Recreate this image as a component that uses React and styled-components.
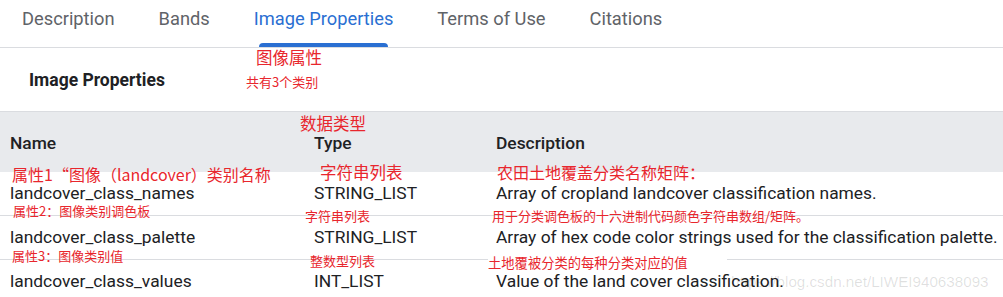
import styled, { createGlobalStyle } from "styled-components";

const GlobalStyle = createGlobalStyle`
  body {
    margin: 0;
    background: #fff;
    font-family: Roboto, "Noto Sans", sans-serif;
    color: #202124;
  }
`;

const Page = styled.div`
  position: relative;
  width: 1003px;
  height: 297px;
  overflow: hidden;
`;

const Tabs = styled.nav`
  display: flex;
  border-bottom: 1px solid #dadce0;
`;

const Tab = styled.div`
  position: relative;
  padding: 0 22px;
  height: 47px;
  line-height: 38px;
  font-size: 18.3px;
  color: ${(props) => (props.$active ? "#2a6fd2" : "#5f6368")};

  &::after {
    content: "";
    display: ${(props) => (props.$active ? "block" : "none")};
    position: absolute;
    left: 27px;
    right: 27px;
    bottom: 0;
    height: 4px;
    border-radius: 4px 4px 0 0;
    background: #2a6fd2;
  }
`;

const Title = styled.h2`
  margin: 0;
  padding: 20px 29px 19px;
  font-size: 17.5px;
  line-height: 24px;
  font-weight: 700;
  color: #202124;
`;

const Table = styled.div`
  border-top: 1px solid #dadce0;
`;

const Row = styled.div`
  display: grid;
  grid-template-columns: 304px 182px 1fr;
  padding: 11px 0 12px 10px;
  font-size: 17.4px;
  line-height: 20px;
  white-space: nowrap;
  border-bottom: 1px solid #dadce0;
`;

const HeaderRow = styled(Row)`
  padding: 21px 0 19px 10px;
  background: #e8eaed;
  font-weight: 500;
  border-bottom: none;
`;

const Note = styled.span`
  position: absolute;
  left: ${(props) => props.$x}px;
  top: ${(props) => props.$y}px;
  font-family: "Noto Sans CJK SC", sans-serif;
  font-size: ${(props) => props.$size}px;
  line-height: 1;
  color: #e8262d;
  white-space: nowrap;
  background: ${(props) => (props.$cover ? "#fff" : "transparent")};
  ${(props) => props.$cover && `width: ${props.$cover}px;`}
`;

const Watermark = styled.span`
  position: absolute;
  left: 731px;
  top: 273px;
  font-family: "Liberation Sans", Arial, sans-serif;
  font-size: 15.2px;
  color: rgba(0, 0, 0, 0.13);
  white-space: nowrap;
`;

const tabs = ["Description", "Bands", "Image Properties", "Terms of Use", "Citations"];

const rows = [
  ["landcover_class_names", "STRING_LIST", "Array of cropland landcover classification names."],
  ["landcover_class_palette", "STRING_LIST", "Array of hex code color strings used for the classification palette."],
  ["landcover_class_values", "INT_LIST", "Value of the land cover classification."],
];

const notes = [
  { x: 256, y: 49, size: 16.5, text: "图像属性" },
  { x: 246, y: 75, size: 13, text: "共有3个类别" },
  { x: 300, y: 115, size: 16.5, text: "数据类型" },
  { x: 12, y: 166, size: 16, text: "属性1“图像（landcover）类别名称" },
  { x: 320, y: 164, size: 16.5, text: "字符串列表" },
  { x: 497, y: 164, size: 16, text: "农田土地覆盖分类名称矩阵：" },
  { x: 13, y: 204, size: 13, text: "属性2：图像类别调色板" },
  { x: 305, y: 209, size: 13, text: "字符串列表" },
  { x: 492, y: 209, size: 13, text: "用于分类调色板的十六进制代码颜色字符串数组/矩阵。" },
  { x: 12, y: 249, size: 13, text: "属性3：图像类别值" },
  { x: 310, y: 254, size: 13, text: "整数型列表" },
  { x: 488, y: 256, size: 13.3, text: "土地覆被分类的每种分类对应的值", cover: 239 },
];

export default function App() {
  return (
    <Page>
      <GlobalStyle />
      <Tabs>
        {tabs.map((t) => (
          <Tab key={t} $active={t === "Image Properties"}>
            {t}
          </Tab>
        ))}
      </Tabs>
      <Title>Image Properties</Title>
      <Table>
        <HeaderRow>
          <span>Name</span>
          <span>Type</span>
          <span>Description</span>
        </HeaderRow>
        {rows.map((r) => (
          <Row key={r[0]}>
            {r.map((c) => (
              <span key={c}>{c}</span>
            ))}
          </Row>
        ))}
      </Table>
      <Watermark>https://blog.csdn.net/LIWEI940638093</Watermark>
      {notes.map((n) => (
        <Note key={n.text} $x={n.x} $y={n.y} $size={n.size} $cover={n.cover}>
          {n.text}
        </Note>
      ))}
    </Page>
  );
}
